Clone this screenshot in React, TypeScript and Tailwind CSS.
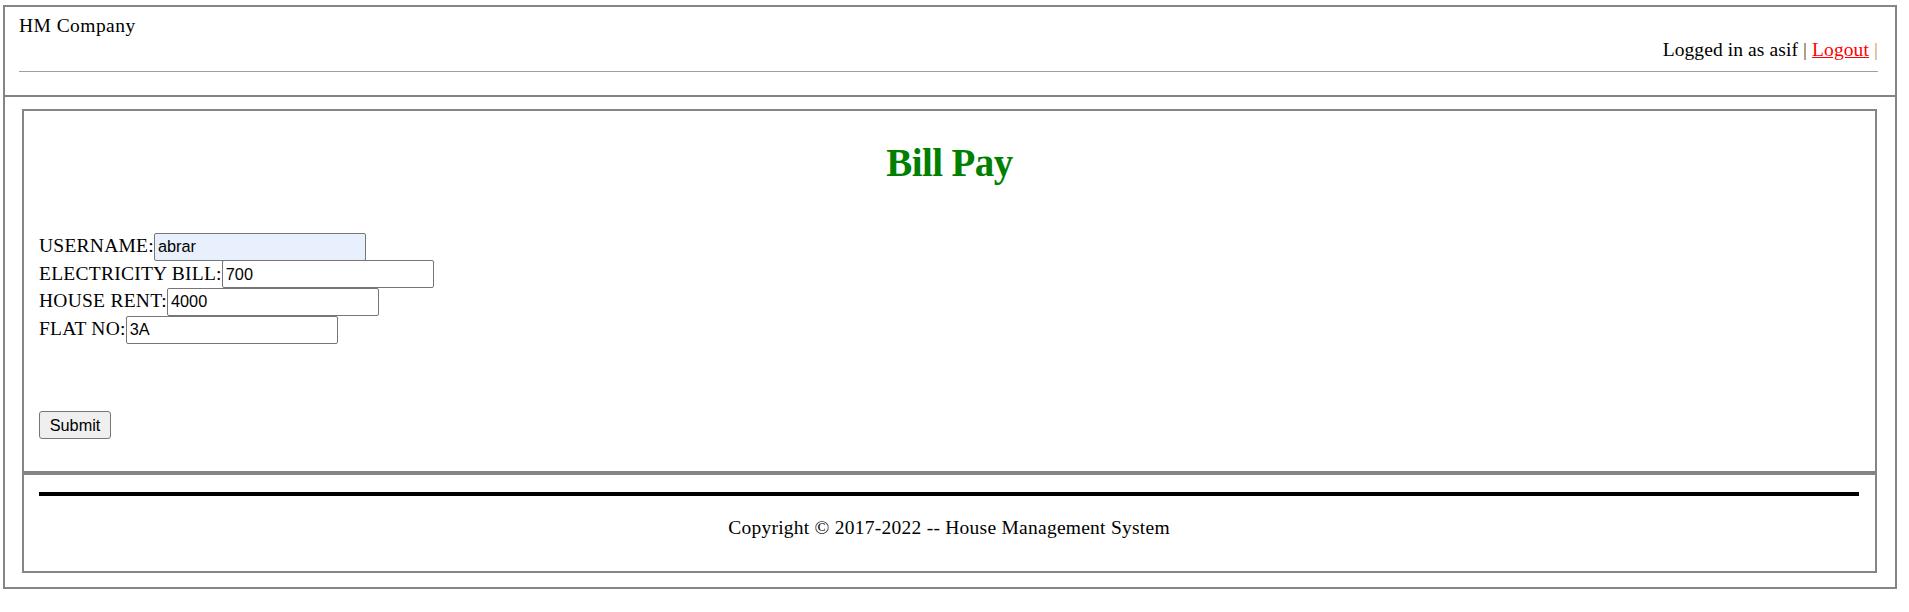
import React from 'react';

const serif = "font-['Liberation_Serif','Times_New_Roman',serif]";
const sans = "font-['Liberation_Sans',Arial,sans-serif]";

const fields = [
  { label: 'USERNAME:', value: 'abrar', autofill: true },
  { label: 'ELECTRICITY BILL:', value: '700' },
  { label: 'HOUSE RENT:', value: '4000' },
  { label: 'FLAT NO:', value: '3A' },
];

function Header() {
  return (
    <div className="border-b-2 border-[#858585] pl-[14px] pr-[17px] pt-[7px] pb-[23px]">
      <div className="leading-[23px] tracking-[0.45px]">HM Company</div>
      <div className="leading-[23px] text-right mt-[1px] tracking-[0.1px]">
        Logged in as asif <span className="text-[#5a4632]">|</span>{' '}
        <a href="#" className="text-[#ff0000] underline">Logout</a>{' '}
        <span className="text-[#c89060]">|</span>
      </div>
      <div className="mt-[10px] h-px bg-[#a0a0a0]" />
    </div>
  );
}

function BillForm() {
  return (
    <div className="border-b-2 border-[#858585] pl-[15px] pr-[15px] pt-[29px] pb-[32px]">
      <h1 className="text-center text-[39px] leading-[45px] font-bold tracking-[-0.6px] text-[#008000]">Bill Pay</h1>

      <div className="mt-[47.6px]">
        {fields.map((f) => (
          <div key={f.label} className="flex items-baseline h-[27.7px]">
            <span className="leading-[23px]">{f.label}</span>
            <input
              defaultValue={f.value}
              className={`${sans} tracking-normal w-[212px] h-[28px] px-[3px] text-[16.3px] text-black border border-[#767676] rounded-[2px] outline-none ${
                f.autofill ? 'bg-[#e8f0fe]' : 'bg-white'
              }`}
            />
          </div>
        ))}
      </div>

      <button
        type="button"
        className={`${sans} tracking-normal mt-[68px] block w-[72px] h-[28px] text-[16.3px] text-black bg-[#efefef] border border-[#767676] rounded-[3px]`}
      >
        Submit
      </button>
    </div>
  );
}

function Footer() {
  return (
    <div className="border-t-2 border-[#858585] pl-[15px] pr-[16px] pt-[17px] pb-[32px]">
      <div className="h-[4px] bg-black" />
      <p className="mt-[20px] leading-[23px] text-center">
        Copyright © 2017-2022 -- House Management System
      </p>
    </div>
  );
}

export default function App() {
  return (
    <div className={`${serif} text-[19.5px] tracking-[0.25px] text-black bg-white min-h-[612px] pt-[5px]`}>
      <div className="ml-[3px] w-[1894px] border-2 border-[#858585]">
        <Header />
        <div className="pl-[17px] pr-[18px] pt-[12px] pb-[14px]">
          <div className="border-2 border-[#858585]">
            <BillForm />
            <Footer />
          </div>
        </div>
      </div>
    </div>
  );
}
